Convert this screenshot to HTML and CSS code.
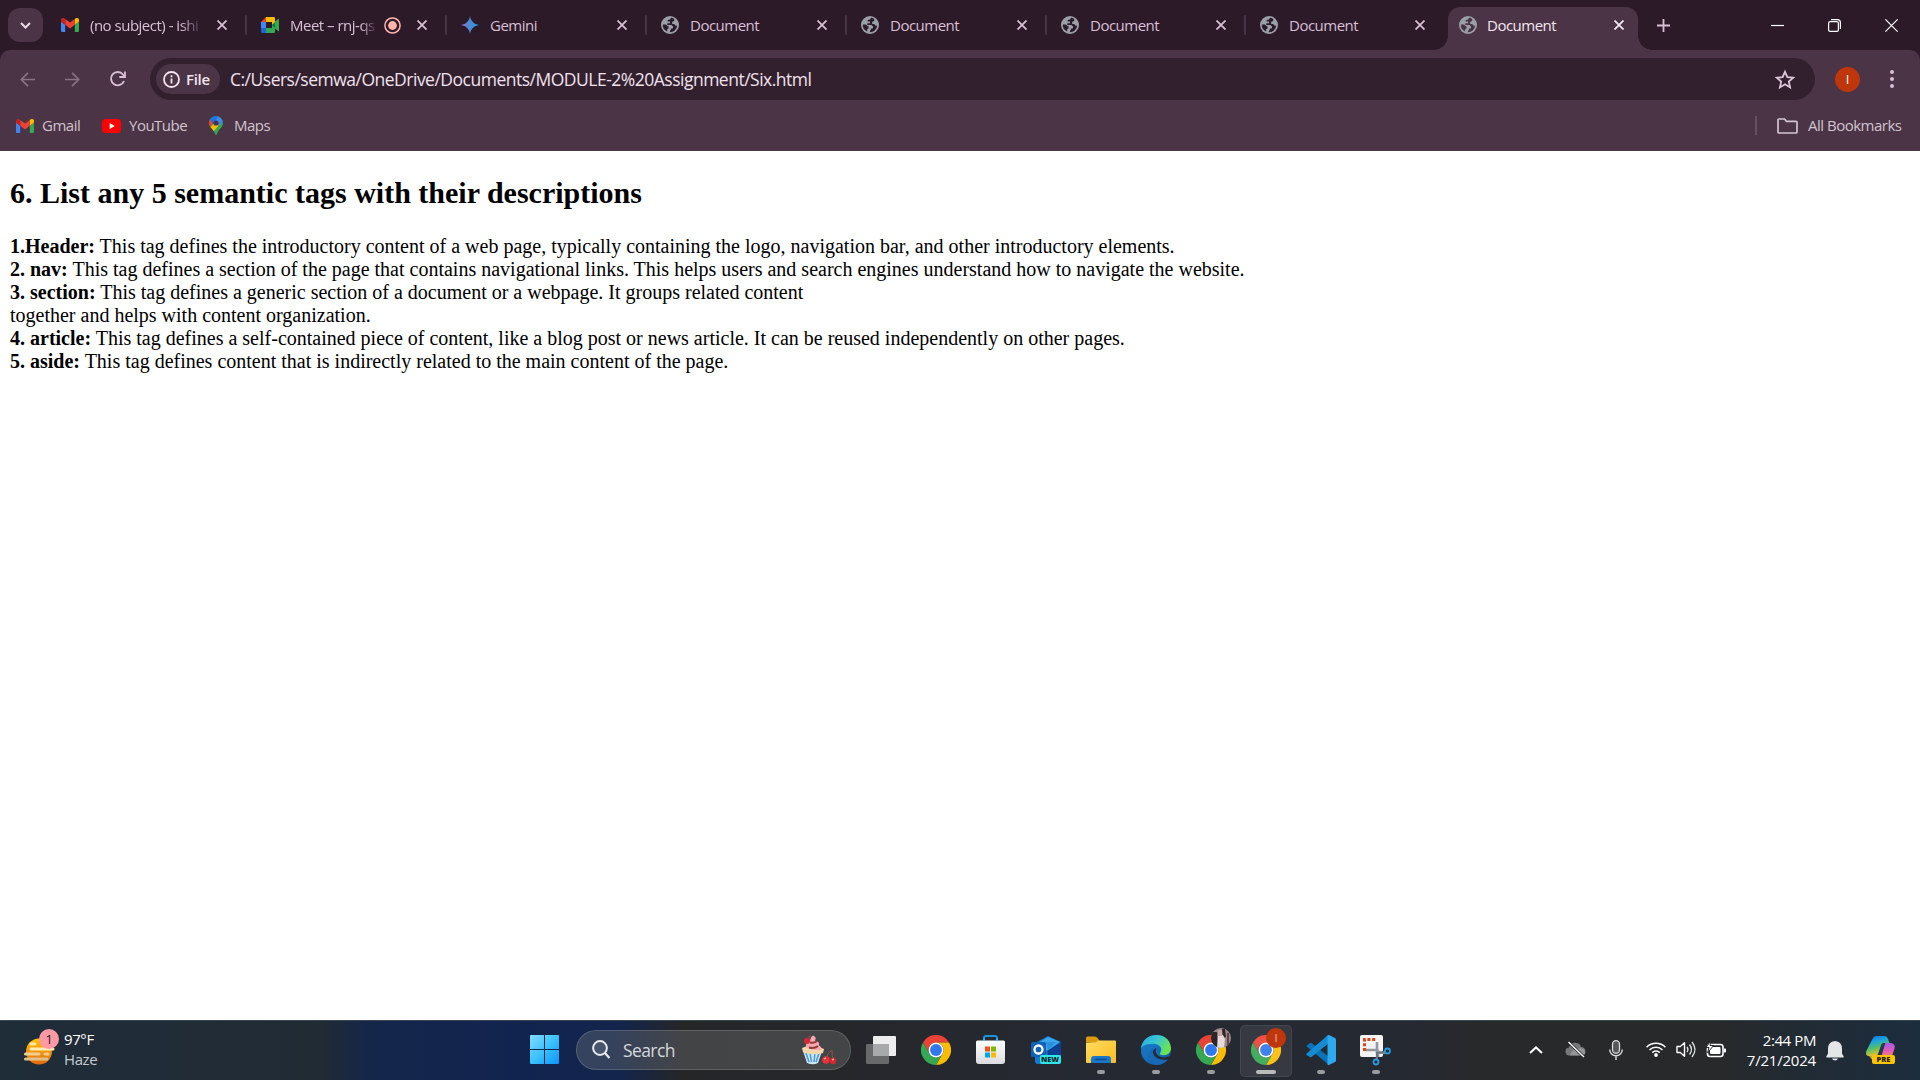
FILE: index.html
```html
<!DOCTYPE html>
<html lang="en">
<head>
<meta charset="utf-8">
<title>Document</title>
<link rel="stylesheet" href="styles.css">
</head>
<body>
<svg class="defs" aria-hidden="true">
  <defs>
    <linearGradient id="gem" x1="0" x2="1" y1="0" y2="0"><stop offset="0" stop-color="#9a72c4"/><stop offset=".4" stop-color="#5684d1"/><stop offset="1" stop-color="#1ba1e3"/></linearGradient>
    <linearGradient id="win" x1="0" y1="0" x2="1" y2="1"><stop offset="0" stop-color="#82dcff"/><stop offset=".5" stop-color="#3cc2fc"/><stop offset="1" stop-color="#0a95f8"/></linearGradient>
    <linearGradient id="sun" x1="0" y1="0" x2="0" y2="1"><stop offset="0" stop-color="#ffc408"/><stop offset="1" stop-color="#e5690e"/></linearGradient>
    <linearGradient id="edgeTop" x1="0" y1="0" x2="1" y2=".5"><stop offset="0" stop-color="#2aa8dc"/><stop offset=".5" stop-color="#36c6d8"/><stop offset="1" stop-color="#6be34e"/></linearGradient>
    <linearGradient id="edgeBot" x1="0" y1="0" x2="1" y2="1"><stop offset="0" stop-color="#1b8ad8"/><stop offset="1" stop-color="#0d529f"/></linearGradient>
    <linearGradient id="folder" x1="0" y1="0" x2="1" y2="1"><stop offset="0" stop-color="#ffdc61"/><stop offset="1" stop-color="#fcbc22"/></linearGradient>
    <linearGradient id="copA" x1="0" y1="0" x2=".3" y2="1"><stop offset="0" stop-color="#1b66e0"/><stop offset=".35" stop-color="#18a6e0"/><stop offset=".65" stop-color="#58bd6c"/><stop offset="1" stop-color="#e7c52b"/></linearGradient>
    <linearGradient id="copB" x1="0" y1="0" x2="0" y2="1"><stop offset="0" stop-color="#a35be8"/><stop offset=".5" stop-color="#e05bb8"/><stop offset="1" stop-color="#f58a5c"/></linearGradient>
    <linearGradient id="paper" x1="0" y1="0" x2="0" y2="1"><stop offset="0" stop-color="#fff"/><stop offset="1" stop-color="#dcdcde"/></linearGradient>
    <symbol id="gmail" viewBox="0 0 18 14"><path fill="#4285f4" d="M0 3.5v9.2C0 13.400.6 14 1.300 14H4.200V6.700z"/><path fill="#34a853" d="M13.800 6.700V14h2.900c.7 0 1.300-.6 1.300-1.300V3.500z"/><path fill="#fbbc04" d="M13.800 1v5.800L18 3.600V1.900C18 .3 16.100-.6 14.800.3z"/><path fill="#ea4335" d="M4.200 6.800V1L9 4.600 13.800 1v5.800L9 10.400z"/><path fill="#c5221f" d="M0 1.900v1.700l4.200 3.200V1L3.200.3C1.900-.6 0 .3 0 1.900z"/></symbol>
    <symbol id="globe" viewBox="0 0 18 18"><circle cx="9" cy="9" r="9" fill="#9aa0a8"/><path fill="var(--hole)" d="M10 1.700 9 3.500 6.800 4 6.500 5.500H9V7.300H6.300V9H10.500L12 10.500V12.300L10.300 12.600 9.300 14.500 8.600 16.200A7.200 7.200 0 0 0 16.200 9.500L14.500 9.800 13.300 8H11.200V5.700L13.200 5V2.900C12.200 2.200 11.200 1.800 10 1.700z"/><path fill="var(--hole)" d="M1.800 8.600H4.800L7.600 10.700V12.500L6.200 13V15.600A7.200 7.200 0 0 1 1.800 8.600z"/></symbol>
    <symbol id="x" viewBox="0 0 10 10"><path d="M.5.500 9.500 9.500M9.500.500.500 9.500" stroke="currentColor" stroke-width="1.800" fill="none"/></symbol>
    <symbol id="chrome" viewBox="0 0 48 48"><path fill="#ea4335" d="M3.200 12A24 24 0 0 1 44.800 12H24A12 12 0 0 0 13.600 30z"/><path fill="#fbbc04" d="M44.800 12A24 24 0 0 1 24 48L34.400 30A12 12 0 0 0 24 12z"/><path fill="#34a853" d="M24 48A24 24 0 0 1 3.200 12L13.600 30A12 12 0 0 0 34.400 30z"/><circle cx="24" cy="24" r="12" fill="#fff"/><circle cx="24" cy="24" r="9.500" fill="#2f78ed"/></symbol>
  </defs>
</svg>

<header class="browser">
  <div class="tabstrip">
    <button class="tab-search"><svg width="11" height="7" viewBox="0 0 11 7"><path d="M1 1l4.500 4.500L10 1" fill="none" stroke="#eadbe6" stroke-width="2"/></svg></button>
    <div class="tab"><svg class="fav" width="18" height="14"><use href="#gmail"/></svg><span class="title fade">(no subject) - ishi</span><svg class="close"><use href="#x"/></svg></div>
    <div class="tab"><svg class="fav" width="18" height="16" viewBox="0 0 18 16"><path fill="#ea4335" d="M0 5 5 0v5z"/><path fill="#4285f4" d="M0 5h5v6H0z"/><path fill="#1a66d2" d="M0 11h5v5H1.300A1.300 1.300 0 0 1 0 14.700z"/><path fill="#fbbc04" d="M5 0h7.700C13.500 0 14 .600 14 1.300V7l-3 1V5H5z"/><path fill="#34a853" d="M5 11h6V8l3-1v7.700c0 .7-.5 1.300-1.300 1.300H5z"/><path fill="#00832d" d="m11 8 3-3v6z"/><path fill="#34a853" d="m14 4.500 3-2.600c.5-.4 1-.1 1 .4v11.400c0 .5-.5.800-1 .4L14 11.500z"/></svg><span class="title fade short">Meet – rnj-qs</span><svg class="rec" width="17" height="17" viewBox="0 0 17 17"><circle cx="8.500" cy="8.500" r="7.600" fill="none" stroke="#ffb4ab" stroke-width="1.500"/><circle cx="8.500" cy="8.500" r="4.400" fill="#ffb4ab"/></svg><svg class="close"><use href="#x"/></svg></div>
    <div class="tab"><svg class="fav" width="18" height="18" viewBox="0 0 18 18"><path fill="url(#gem)" d="M9 0c.7 5 4 8.300 9 9-5 .7-8.300 4-9 9-.7-5-4-8.300-9-9 5-.7 8.300-4 9-9z"/></svg><span class="title">Gemini</span><svg class="close"><use href="#x"/></svg></div>
    <div class="tab"><svg class="fav" width="18" height="18"><use href="#globe"/></svg><span class="title">Document</span><svg class="close"><use href="#x"/></svg></div>
    <div class="tab"><svg class="fav" width="18" height="18"><use href="#globe"/></svg><span class="title">Document</span><svg class="close"><use href="#x"/></svg></div>
    <div class="tab narrow"><svg class="fav" width="18" height="18"><use href="#globe"/></svg><span class="title">Document</span><svg class="close"><use href="#x"/></svg></div>
    <div class="tab narrow last"><svg class="fav" width="18" height="18"><use href="#globe"/></svg><span class="title">Document</span><svg class="close"><use href="#x"/></svg></div>
    <div class="tab active"><svg class="fav" width="18" height="18"><use href="#globe"/></svg><span class="title">Document</span><svg class="close"><use href="#x"/></svg></div>
    <svg class="plus" width="13" height="13" viewBox="0 0 13 13"><path d="M6.500 0v13M0 6.500h13" stroke="#d9bfd5" stroke-width="1.800"/></svg>
    <div class="winctl">
      <svg width="13" height="13" viewBox="0 0 13 13"><path d="M0 6.500h13" stroke="#fff" stroke-width="1.200"/></svg>
      <svg width="13" height="13" viewBox="0 0 13 13"><path d="M3 .600h6.400a3 3 0 0 1 3 3V10" fill="none" stroke="#fff" stroke-width="1.200"/><rect x=".6" y="2.600" width="9.800" height="9.800" rx="1.600" fill="none" stroke="#fff" stroke-width="1.200"/></svg>
      <svg width="13" height="13" viewBox="0 0 13 13"><path d="M.4.400l12.200 12.200M12.600.400.400 12.600" stroke="#fff" stroke-width="1.200"/></svg>
    </div>
  </div>

  <div class="chrome-body">
    <div class="toolbar">
      <svg class="nav dim" width="15" height="15" viewBox="0 0 15 15"><path d="M15 7.500H1.500M8 .800 1.300 7.500 8 14.200" fill="none" stroke="currentColor" stroke-width="1.700"/></svg>
      <svg class="nav dim" width="15" height="15" viewBox="0 0 15 15"><path d="M0 7.500h13.500M7 .800l6.700 6.700L7 14.200" fill="none" stroke="currentColor" stroke-width="1.700"/></svg>
      <svg class="nav reload" width="16" height="16" viewBox="0 0 16 16"><path d="M14 10A6.700 6.700 0 1 1 13 3.500L14.500 5.500" fill="none" stroke="currentColor" stroke-width="1.900"/><path d="M15 .500V6H9.300" fill="none" stroke="currentColor" stroke-width="1.800"/></svg>
      <div class="omnibox">
        <div class="chip"><svg width="17" height="17" viewBox="0 0 17 17"><circle cx="8.500" cy="8.500" r="7.500" fill="none" stroke="#f2e3ef" stroke-width="1.800"/><path d="M8.500 7.500v5M8.500 4.300v1.900" stroke="#f2e3ef" stroke-width="1.800"/></svg><span>File</span></div>
        <span class="url">C:/Users/semwa/OneDrive/Documents/MODULE-2%20Assignment/Six.html</span>
        <svg class="star" width="20" height="19" viewBox="0 0 20 19"><path d="M10 1.800l2.400 5.400 5.800.5-4.400 3.900 1.300 5.800L10 14.300l-5.100 3.100 1.300-5.800L1.800 7.700l5.800-.5z" fill="none" stroke="#dcc8d8" stroke-width="1.800"/></svg>
      </div>
      <span class="avatar">I</span>
      <svg width="4" height="18" viewBox="0 0 4 18"><g fill="#d9bfd5"><circle cx="2" cy="2" r="2"/><circle cx="2" cy="9" r="2"/><circle cx="2" cy="16" r="2"/></g></svg>
    </div>
    <div class="bookmarks">
      <div class="bm"><svg width="18" height="14"><use href="#gmail"/></svg><span class="b-gmail">Gmail</span></div>
      <div class="bm yt"><svg width="19" height="14" viewBox="0 0 19 14"><rect width="19" height="14" rx="3.500" fill="red"/><path d="M7.700 4v6l5-3z" fill="#fff"/></svg><span class="b-yt">YouTube</span></div>
      <div class="bm maps"><svg width="14" height="19" viewBox="0 0 14 19"><clipPath id="pin"><path d="M7 0a7 7 0 0 1 7 7c0 4-3.500 5.500-5 8.500L7.600 18.500q-.6 1-1.200 0L5 15.500C3.500 12.500 0 11 0 7a7 7 0 0 1 7-7z"/></clipPath><g clip-path="url(#pin)"><path fill="#34a853" d="M0 0h14v19H0z"/><path fill="#fbbc04" d="M0 13 9 3l2 5-7 8z"/><path fill="#ea4335" d="M0 2l5 4-5 6.500z"/><path fill="#1a73e8" d="M1 2.500 7-1l3 2-6 7z"/><path fill="#4285f4" d="M9 0l5 5-4 5-4-4z"/></g><circle cx="7" cy="7" r="2.600" fill="#4a3445"/></svg><span class="b-maps">Maps</span></div>
      <i class="divider"></i>
      <div class="bm all"><svg width="21" height="16" viewBox="0 0 21 16"><path d="M1 14V2q0-1 1-1h5.500l2 2.300H19q1 0 1 1V14q0 1-1 1H2q-1 0-1-1z" fill="none" stroke="#d3c3d0" stroke-width="1.700"/></svg><span class="b-all">All Bookmarks</span></div>
    </div>
  </div>
</header>

<main class="page">
  <h2>6. List any 5 semantic tags with their descriptions</h2>
  <b>1.Header:</b> This tag defines the introductory content of a web page, typically containing the logo, navigation bar, and other introductory elements.<br>
  <b>2. nav:</b> This tag defines a section of the page that contains navigational links. This helps users and search engines understand how to navigate the website.<br>
  <b>3. section:</b> This tag defines a generic section of a document or a webpage. It groups related content<br>
  together and helps with content organization.<br>
  <b>4. article:</b> This tag defines a self-contained piece of content, like a blog post or news article. It can be reused independently on other pages.<br>
  <b>5. aside:</b> This tag defines content that is indirectly related to the main content of the page.
</main>

<footer class="taskbar">
  <div class="weather">
    <div class="sun"><svg width="30" height="28" viewBox="0 0 30 28"><ellipse cx="15" cy="13.500" rx="13" ry="13" fill="url(#sun)"/><g stroke-width="3" stroke-linecap="round"><path d="M7 6h4" stroke="#ffe9a8"/><path d="M7 11h22" stroke="#ffedb5"/><path d="M1.500 16h13.500M21 16h3" stroke="#efcf92"/><path d="M1.500 21H23" stroke="#e0c08a"/></g></svg><span class="count">1</span></div>
    <div class="wtext"><span class="temp">97°F</span><span class="haze">Haze</span></div>
  </div>
  <div class="apps">
    <div class="app start"><svg width="29" height="29" viewBox="0 0 29 29"><path fill="url(#win)" d="M1 0h13v14H0V1q0-1 1-1zM15 0h13q1 0 1 1v13H15zM0 15h14v14H1q-1 0-1-1zM15 15h14v13q0 1-1 1H15z"/></svg></div>
    <div class="search">
      <svg width="18" height="19" viewBox="0 0 18 19"><circle cx="8" cy="8" r="6.900" fill="#6c7788" fill-opacity=".35" stroke="#e6e8ec" stroke-width="2"/><path d="M13 13l4.400 5" stroke="#e6e8ec" stroke-width="2.300"/></svg>
      <span>Search</span>
      <svg class="cake" width="35" height="30" viewBox="0 0 35 30"><path fill="#c9e6f7" d="M2 16h19l-4 12q-5 2.500-11 0z"/><path d="M5 18l3 9M9 18l1.500 9M14 18l-1 9M18 18l-3 9" stroke="#4a9bd5" stroke-width="1.500"/><path fill="#f5d7ad" d="M1 13q10-5 22 1l-1 4q-10 3-20-1z"/><path fill="#f8a5b4" d="M5 12q-1-4 4-5 0-5 3-6.500 4 1.500 2 5 5 1 4 5 3 1 2 4-8 2-15-2.500z"/><path d="M8 12.500q5 1.500 9-1.500M9 7.500q4 1 7-1.500" stroke="#8b3f31" stroke-width="2" fill="none"/><circle cx="6" cy="6" r="3" fill="#dc2637"/><path d="M7 3q0-2 3-2M25 24q1-6 6-9 0 6 1 10" stroke="#915443" fill="none"/><circle cx="25" cy="25" r="3.800" fill="#e5323a"/><circle cx="32" cy="26" r="3.300" fill="#cf2832"/><path d="M23 24l2-1M31 25l2-1" stroke="#ff9e94" stroke-width="1.400"/></svg>
    </div>
    <div class="app"><svg width="30" height="28" viewBox="0 0 30 28"><rect x="0" y="8" width="23" height="20" rx="1" fill="#68696b"/><rect x="7" y="0" width="23" height="20" rx="1" fill="#ededed"/><path d="M7 8h16v12H7z" fill="#a8a9aa"/></svg></div>
    <div class="app"><svg width="30" height="30"><use href="#chrome"/></svg></div>
    <div class="app"><svg width="29" height="30" viewBox="0 0 29 30"><path d="M8 6V3q0-2 2-2h9q2 0 2 2v3" fill="none" stroke="#1a91d8" stroke-width="2"/><path d="M0 7q0-1.500 1.500-1.500h26Q29 5.500 29 7v19q0 3-3 3H3q-3 0-3-3z" fill="url(#paper)"/><path d="M8 3.500v2.300M21 3.500v2.300" stroke="#35b8f0" stroke-width="2"/><path fill="#f25022" d="M9 11.500h5v5H9z"/><path fill="#7fba00" d="M15 11.500h5v5h-5z"/><path fill="#00a4ef" d="M9 17.500h5v5H9z"/><path fill="#ffb900" d="M15 17.500h5v5h-5z"/></svg></div>
    <div class="app"><div class="outlook"><svg width="30" height="28" viewBox="0 0 30 28"><path fill="#1678cf" d="M4 7 17 0l13 6v19q0 3-3 3H7q-3 0-3-3z"/><path fill="#3aa7ea" d="M8 6.500 17 1l12 5-13 9z"/><path fill="#0c3f91" d="M16 15 30 6v13H17z"/><path fill="#2a8fe0" d="M15 6h10l-8 8z"/><rect y="6" width="15" height="15" rx="1.500" fill="#0f62b5"/><circle cx="7.500" cy="13.500" r="4" fill="none" stroke="#fff" stroke-width="2.300"/></svg><span class="new">NEW</span></div></div>
    <div class="app run"><svg width="30" height="28" viewBox="0 0 30 28"><path d="M0 6V2q0-1.500 1.500-1.500H9q1.500 0 2.500 1.500l2 2.500-2 3z" fill="#dd9b10"/><path d="M0 6.500h9.500l3-2H29q1 0 1 1V26q0 1-1 1H1q-1 0-1-1z" fill="url(#folder)"/><path d="M5 27v-4q0-3 3-3h14q3 0 3 3v4z" fill="#1877c9"/><path d="M10 23.300h10" stroke="#0b4e94" stroke-width="1.800" stroke-linecap="round"/></svg></div>
    <div class="app run"><svg width="30" height="30" viewBox="0 0 30 30"><circle cx="15" cy="15" r="15" fill="url(#edgeBot)"/><path fill="url(#edgeTop)" d="M0 14C1-4 29-5 30 13c0 5-4 8-9 7-2-.4-3-1-2-2 4-5-2-10-8-9C5 9 1 11 0 14z"/><path fill="#196bb8" d="M11 9.500c-8 5-5 17 4 20.500C4 30-3 20 1 12c2-2 6-3 10-2.500z" opacity=".4"/><path fill="#262a30" d="M15.500 13c-2 2-1 7 3 8.500 4 1.700 8 .8 10-.8l2 1L27 25c-8 2-15-1-15-8 0-2 1.500-3.500 3.500-4z"/><path fill="#1768b5" d="M12 13c-2 7 4 13 15 11.500-3 4-8 6-13 5C6 26 5 18 12 13z"/></svg></div>
    <div class="app run"><svg width="30" height="30"><use href="#chrome"/></svg><svg class="badge photo" width="20" height="20" viewBox="0 0 20 20"><clipPath id="ph"><circle cx="10" cy="10" r="10"/></clipPath><g clip-path="url(#ph)"><path fill="#9c8585" d="M0 0h20v20H0z"/><path fill="#2c2628" d="M0 4h6l1 16H0zM11 1h3l1 8-3 1z"/><path fill="#e6dadb" d="M7 8l5-1 2 4-1 9H6z"/><path fill="#c4a9a6" d="M7 2h4v6H7z"/><path fill="#594547" d="M16 5h2v13h-2z"/></g></svg></div>
    <div class="app run current"><svg width="30" height="30"><use href="#chrome"/></svg><span class="badge letter">I</span></div>
    <div class="app run"><svg width="30" height="30" viewBox="0 0 30 30"><path fill="#0872b8" d="M2 9.500 4 8q.8-.5 1.500 0L23 22v8L.600 11.400q-.5-1 1.400-1.900z"/><path fill="#148bd3" d="M23 0v8L5.500 22q-.8.500-1.500 0L.600 20q-.8-1 0-1.600L21.500.400z"/><path fill="#2fa9ee" d="M21.500.300 23 0l6 3q1 .5 1 1.500v21q0 1-1 1.500l-6 3-1.500-.3V.300z"/></svg></div>
    <div class="app run"><svg width="31" height="30" viewBox="0 0 31 30"><rect x="0" y="0" width="23" height="22" rx="2" fill="#f4f4f4"/><path d="M4.500 16V4.500H17" fill="none" stroke="#df4315" stroke-width="3" stroke-dasharray="3 1.800"/><path d="M6 15h11q1 0 1 1v6M17 7v10l8 1" fill="none" stroke="#93989e" stroke-width="2.600"/><path d="M17 17v6l-1 2M17 18l8-1" fill="none" stroke="#6b7681" stroke-width="2.200"/><circle cx="16" cy="27" r="2.500" fill="none" stroke="#279bdb" stroke-width="1.800"/><circle cx="27.500" cy="16" r="2.500" fill="none" stroke="#279bdb" stroke-width="1.800"/></svg></div>
  </div>
  <div class="tray">
    <svg width="14" height="8" viewBox="0 0 14 8"><path d="M1 7l6-5.600L13 7" fill="none" stroke="#fff" stroke-width="2"/></svg>
    <svg width="20" height="17" viewBox="0 0 20 17"><path fill="#77787b" d="M4 14.500a4 4 0 0 1-1-8Q5 1 10 2q4 0 5 4a4.300 4.300 0 0 1 1 8.500z"/><path fill="#a0a1a3" d="M4 14.500Q5 9 11 8q5-3 8 2 1 4-3 4.500z" opacity=".7"/><path d="M2.500 1 18 16" stroke="#262829" stroke-width="3"/><path d="M2.500 1 18 16" stroke="#fff" stroke-width="1.400"/></svg>
    <svg width="14" height="20" viewBox="0 0 14 20"><rect x="3.500" y=".7" width="7" height="12.500" rx="3.500" fill="#555759" stroke="#ddd" stroke-width="1.300"/><path d="M.7 9.500a6.300 6.300 0 0 0 12.600 0M7 15.800V20" fill="none" stroke="#ddd" stroke-width="1.400"/></svg>
    <div class="quick">
      <svg width="20" height="16" viewBox="0 0 20 16"><g fill="none" stroke="#fff" stroke-width="1.500"><path d="M.600 6.200a13.200 13.200 0 0 1 18.800 0M3.500 9a9.200 9.200 0 0 1 13 0M6.300 11.600a5.300 5.300 0 0 1 7.400 0"/></g><circle cx="10" cy="14" r="1.900" fill="#fff"/></svg>
      <svg width="20" height="17" viewBox="0 0 20 17"><path d="M1 5.500h3.300L8.500 1.700v13.600L4.300 11.500H1z" fill="none" stroke="#fff" stroke-width="1.400" stroke-linejoin="round"/><path d="M11 6q1.800 2.500 0 5M13.500 3.500q4 5 0 10M16 1q6 7.500 0 15" fill="none" stroke="#ddd" stroke-width="1.400"/></svg>
      <svg width="20" height="16" viewBox="0 0 20 16"><rect x="1.500" y="3.500" width="15.500" height="12" rx="2.500" fill="none" stroke="#fff" stroke-width="1.600"/><rect x="4" y="6" width="10.500" height="7" rx="1" fill="#fff"/><path d="M18 7.500h1.200q.8 0 .8.800v2.400q0 .8-.8.800H18z" fill="#fff"/><path d="M5-.500 0 6.500h3l-1.500 5.500L7.500 4.500h-3.500z" fill="#fff" stroke="#262829" stroke-width="1"/></svg>
    </div>
    <div class="clock"><span class="time">2:44 PM</span><span class="date">7/21/2024</span></div>
    <svg class="bell" width="18" height="20" viewBox="0 0 18 20"><path fill="#e4e5e6" d="M9 0q7 .5 7 8v4.500l1.700 3q.3 1-.7 1H1q-1 0-.7-1l1.700-3V8Q2 .500 9 0zM6 17.500h6q-.6 2-3 2t-3-2z"/></svg>
    <div class="copilot"><svg width="29" height="28" viewBox="0 0 29 28"><path fill="url(#copA)" d="M7 2Q8 0 10 0h8q3 0 4 3l1.500 4H18q-2 0-2.700 2L12 18q-.7 2-3 2H3q-4 0-2.700-5z"/><path fill="url(#copB)" d="M19 7h6q5 1 3.500 5.500L26 20q-1 2-3 2h-8z"/><path fill="#f6c63a" d="M3 20h12v6H8z" opacity=".8"/><path fill="#263c48" d="M16 8h3l-4 11h-3z"/></svg><span class="pre">PRE</span></div>
  </div>
</footer>
</body>
</html>
```
FILE: styles.css
```css
* { box-sizing: border-box; }
body {
  margin: 0;
  width: 1920px;
  height: 1080px;
  display: flex;
  flex-direction: column;
  overflow: hidden;
  background: #fff;
  font-family: "Open Sans", "Noto Sans", sans-serif;
}
svg { display: block; flex: none; overflow: visible; }
.defs { position: absolute; width: 0; height: 0; }
span { white-space: nowrap; }

.browser { flex: none; height: 151px; background: #2c1a29; }
.tabstrip { height: 50px; display: flex; align-items: center; padding-left: 8px; }
.tab-search {
  width: 35px; height: 34px; padding: 0; margin-right: 5px;
  border: 0; border-radius: 12px; background: #4a3445;
  display: flex; align-items: center; justify-content: center;
}
.tab {
  --hole: #2c1a29;
  width: 200px; height: 50px; flex: none;
  display: flex; align-items: center;
  padding: 0 21px 0 13px;
  color: #d9bfd5;
  position: relative;
}
.tab::after {
  content: ""; position: absolute; right: 1px; top: 15px;
  width: 2px; height: 20px; border-radius: 1px; background: #4a3445;
}
.narrow { width: 199px; }
.last::after { display: none; }
.fav { margin-right: 11px; }
.title { font-size: 15px; line-height: 20px; letter-spacing: -0.5px; flex: 1; }
.fade { flex: none; width: 113px; margin-right: auto; -webkit-mask-image: linear-gradient(90deg, #000 80%, transparent); mask-image: linear-gradient(90deg, #000 80%, transparent); }
.short { width: 88px; }
.rec { margin-right: 16px; }
.close { width: 10px; height: 10px; }
.active {
  --hole: #4a3445;
  width: 190px; height: 43px; align-self: flex-end;
  margin-left: 2px; padding: 0 14px 7px 11px;
  border-radius: 12px 12px 0 0;
  background: #4a3445; color: #f5e6f2;
}
.active .fav { margin-right: 10px; }
.active::before, .active::after {
  content: ""; position: absolute; top: auto; bottom: 0;
  width: 14px; height: 14px; border-radius: 0;
}
.active::before { left: -14px; background: radial-gradient(circle at 0 0, transparent 13.5px, #4a3445 14px); }
.active::after { right: -14px; background: radial-gradient(circle at 100% 0, transparent 13.5px, #4a3445 14px); }
.plus { margin-left: 19px; }
.winctl { margin-left: auto; display: flex; gap: 44px; padding-right: 22px; }

.chrome-body { height: 101px; background: #4a3445; border-radius: 10px 10px 0 0; }
.toolbar { height: 58px; padding: 0 26px 0 20px; display: flex; align-items: center; }
.nav { color: #d9bfd5; margin-right: 30px; }
.dim { color: #8a7285; }
.reload { margin-right: 24px; }
.omnibox {
  width: 1665px; height: 42px; border-radius: 21px; background: #33202f;
  display: flex; align-items: center; padding: 0 20px 0 6px;
}
.chip {
  width: 64px; height: 30px; border-radius: 15px; background: #4a3445;
  display: flex; align-items: center; padding-left: 7px; gap: 6px;
  color: #f2e3ef; font-size: 15px; font-weight: 600; letter-spacing: -0.3px;
}
.url { margin-left: 10px; font-size: 17.5px; letter-spacing: -0.5px; color: #f0e2ed; }
.star { margin-left: auto; }
.avatar {
  width: 25px; height: 25px; margin: 0 30px 0 20px; border-radius: 50%;
  background: #bf360c; color: #fff; font-size: 13px; line-height: 25px; text-align: center;
}
.bookmarks { height: 35px; padding: 0 18px 0 16px; display: flex; align-items: center; color: #d3c3d0; font-size: 15px; line-height: 20px; }
.bm { display: flex; align-items: center; gap: 8px; }
.bm span { padding-bottom: 1px; letter-spacing: -0.5px; }
.b-gmail { width: 38px; }
.yt { margin-left: 22px; }
.b-yt { width: 58px; }
.maps { margin-left: 22px; gap: 11px; }
.divider { width: 2px; height: 19px; margin-left: auto; background: #675062; }
.all { margin-left: 20px; gap: 10px; }
.b-all { width: 94px; }

.page { flex: 1; padding: 23.9px 8px 0 10px; font-family: "Liberation Serif", serif; font-size: 20px; line-height: 23px; color: #000; }
.page h2 { margin: 0 0 24.9px; font-size: 30px; line-height: 35px; }

.taskbar {
  flex: none; height: 60px;
  display: flex; align-items: center;
  padding-bottom: 2px;
  border-top: 1px solid #3a474f;
  background: linear-gradient(90deg, #1f2d39 0, #212b34 320px, #14264a 370px, #11244f 520px, #13254c 620px, #242628 680px, #25272b 850px, #252932 1100px, #252932 1400px, #27292b 1480px, #27292b 1720px, #212b34 1800px, #1c2d3d 1920px);
}
.weather { flex: none; width: 529px; padding-left: 25px; display: flex; align-items: center; }
.sun { position: relative; margin: 5px 0 0 -1px; }
.count {
  position: absolute; left: 15px; top: -9px; width: 20px; height: 20px;
  border-radius: 50%; background: #ff99a4; color: #222; font-size: 13.5px; line-height: 20px; text-align: center;
}
.wtext { display: flex; flex-direction: column; margin: -2px 0 0 10px; font-size: 15px; line-height: 20px; color: #fff; }
.temp { letter-spacing: -0.4px; }
.haze { color: #c5cace; letter-spacing: -0.4px; }
.apps { display: flex; align-items: center; height: 57px; }
.app { position: relative; width: 55px; height: 57px; display: flex; align-items: center; justify-content: center; }
.start { width: 30px; margin-right: 17px; }
.run::after {
  content: ""; position: absolute; left: 24px; bottom: 4px;
  width: 8px; height: 4px; border-radius: 2px; background: #9a9c9f;
}
.current::before {
  content: ""; position: absolute; left: 2px; top: 4px;
  width: 50px; height: 50px; border-radius: 5px; background: #ffffff14; border: 1px solid #ffffff12;
}
.current::after { left: 18px; width: 20px; background: #b9bbbd; }
.badge { position: absolute; left: 28px; top: 7px; width: 20px; height: 20px; border-radius: 50%; }
.letter { left: 28px; background: #bf360c; color: #f0b9a8; font-size: 11px; line-height: 20px; text-align: center; }
.search {
  width: 275px; height: 40px; margin-right: 2px; padding: 0 14px 0 15px; border-radius: 20px;
  display: flex; align-items: center;
  border: 1px solid #ffffff26;
  background: linear-gradient(90deg, #35435f 0, #34425e 30px, #434446 110px, #444546 100%);
  color: #d6d8da; font-size: 17.5px; letter-spacing: -0.6px;
}
.search span { margin-left: 13px; }
.cake { margin-left: auto; }
.outlook { position: relative; }
.new {
  position: absolute; left: 9px; top: 19px; width: 21px; height: 9px; border-radius: 2px;
  background: #2ee6e6; color: #10262b; font-size: 7.5px; font-weight: 800; line-height: 9px; text-align: center;
}
.tray { flex: 1; display: flex; align-items: center; justify-content: flex-end; padding-right: 25px; gap: 23px; }
.quick { display: flex; gap: 10px; }
.clock { width: 68px; padding-right: 1px; display: flex; flex-direction: column; align-items: flex-end; font-size: 15px; line-height: 20px; color: #fff; }
.time { letter-spacing: -0.4px; }
.date { letter-spacing: -0.2px; }
.bell { margin: 2px 0 0 -14px; }
.copilot { position: relative; margin-left: -1px; }
.pre {
  position: absolute; left: 6px; top: 19px; width: 23px; height: 9px; border-radius: 2px;
  background: #fdc500; color: #262000; font-size: 7.5px; font-weight: 800; line-height: 9px; text-align: center;
}
```
